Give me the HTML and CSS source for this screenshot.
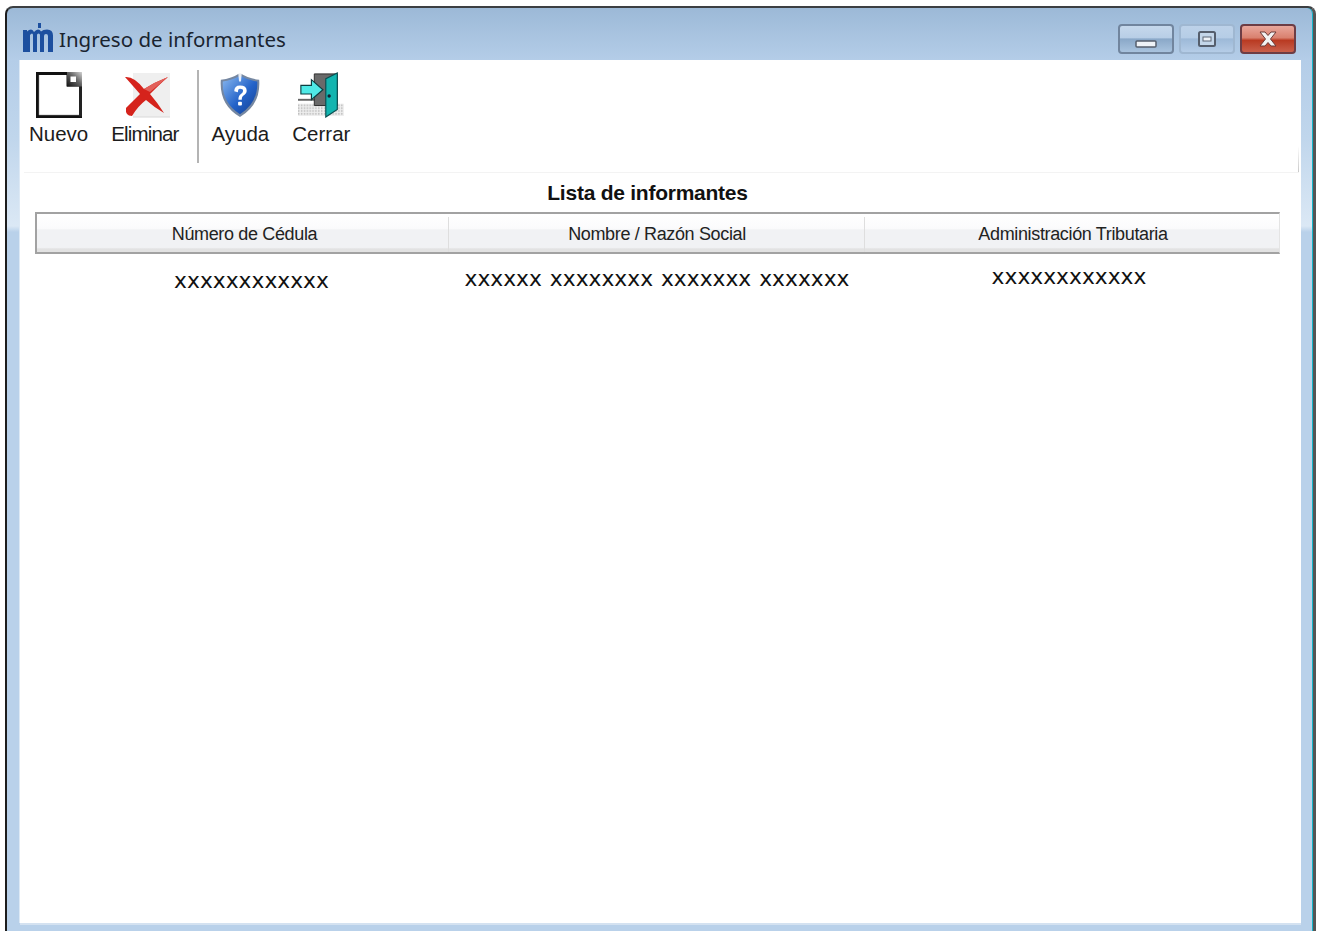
FILE: index.html
```html
<!DOCTYPE html>
<html lang="es">
<head>
<meta charset="utf-8">
<title>Ingreso de informantes</title>
<link rel="stylesheet" href="styles.css">
</head>
<body>
<div class="window">
  <header class="titlebar">
    <svg class="app-logo" viewBox="0 0 30 30" aria-hidden="true">
      <rect x="15" y="0" width="3" height="5" fill="#1c4f9f"/>
      <path d="M0 29V7h4v1.500Q6 6.500 8 6.500t3 2.500Q13 6.500 15 6.500t3 2Q20 6.500 24 6.500q6 0 6 6V29h-5V13q0-2-2-2t-2 2v16h-4V12q0-1.500-1.500-1.500T14 12v17h-4V12q0-1.500-1-1.500T7 12v17z" fill="#1c4f9f"/>
    </svg>
    <span class="window-title">Ingreso de informantes</span>
    <div class="window-controls">
      <button class="ctl">
        <svg viewBox="0 0 22 10" width="22" height="10"><rect x="1" y="2" width="20" height="6" rx="1" fill="#eef2f7" stroke="#555e6c" stroke-width="1.500"/></svg>
      </button>
      <button class="ctl ctl-max">
        <svg viewBox="0 0 20 18" width="20" height="18"><rect x="2" y="2" width="16" height="14" rx="1.500" fill="#c4d6e9" stroke="#555e6c" stroke-width="2"/><rect x="6" y="7" width="8" height="4" fill="#eef2f7" stroke="#5d6776"/></svg>
      </button>
      <button class="ctl ctl-close">
        <svg viewBox="0 0 24 16" width="24" height="16"><path d="M4 1h5l3 3.500L15 1h5l-5.500 7L20 15h-5l-3-3.500L9 15H4l5.500-7z" fill="#f2f2f2" stroke="#6b3b38"/></svg>
      </button>
    </div>
  </header>

  <main class="client">
    <nav class="toolbar">
      <div class="tool">
        <svg class="tool-icon" viewBox="0 0 46 46">
          <defs><linearGradient id="fold" x1="0" y1="1" x2="1" y2="0"><stop offset="0" stop-color="#111"/><stop offset=".55" stop-color="#666"/><stop offset="1" stop-color="#d4d4d4"/></linearGradient></defs>
          <path d="M1.500 1.500H32V13H44.500V44.500H1.500z" fill="#fff" stroke="#111" stroke-width="3"/>
          <path d="M44.500 13V44.500" stroke="#222" stroke-width="3"/>
          <rect x="31" y="0" width="15" height="14.500" fill="url(#fold)"/>
          <rect x="34.500" y="4.500" width="5.500" height="5.500" fill="#fff"/>
          <path d="M3 43H43M3 3V43" stroke="#999" stroke-width="1" fill="none" opacity=".5"/>
        </svg>
        <span>Nuevo</span>
      </div>
      <div class="tool tool-delete">
        <svg class="tool-icon" viewBox="0 0 46 46">
          <rect x="9" y="1" width="37" height="44" fill="#efefef"/>
          <path d="M9 45H46" stroke="#d8d8d8"/>
          <path d="M1 5Q10 4 20 17Q31 10 44 5Q36 12 26 22Q33 30 40 41Q31 36 22 28Q14 34 8 44Q1 44 2 36Q8 30 16 22Q9 14 1 5z" fill="#d5231c"/>
          <path d="M20 17Q31 10 44 5L26 20z" fill="#e2605a"/>
        </svg>
        <span>Eliminar</span>
      </div>
      <div class="tool-sep"></div>
      <div class="tool">
        <svg class="tool-icon" viewBox="0 0 46 48">
          <defs>
            <linearGradient id="shield" x1="0" y1="0" x2="1" y2="1"><stop offset="0" stop-color="#8ab9ef"/><stop offset=".55" stop-color="#2463c9"/><stop offset="1" stop-color="#123f92"/></linearGradient>
          </defs>
          <path d="M23 1Q32 7 43 8Q45 34 23 47Q1 34 3 8Q14 7 23 1z" fill="#7587a1"/>
          <path d="M23 4Q32 9 41 10Q42 32 23 44Q4 32 5 10Q14 9 23 4z" fill="url(#shield)"/>
          <path d="M21 0h4l-1 10h-2z" fill="#fff" opacity=".85"/>
          <path d="M17 20Q17 14 23 14Q30 14 30 19.500Q30 22.500 26 25Q24.800 26 24.800 29H21.400Q21 25 24 23Q26.200 21.500 26.200 19.500Q26.200 17.500 23 17.500Q20.800 17.500 20.800 21z" fill="#fff"/>
          <rect x="21" y="31" width="4" height="4" rx="1" fill="#fff"/>
        </svg>
        <span>Ayuda</span>
      </div>
      <div class="tool">
        <svg class="tool-icon" viewBox="0 0 48 46">
          <defs><pattern id="floor" width="3" height="3" patternUnits="userSpaceOnUse"><rect width="3" height="3" fill="#efefef"/><rect width="1.500" height="1.500" fill="#b4b4b4"/></pattern></defs>
          <path d="M0 32H48V45H0z" fill="url(#floor)"/>
          <path d="M0 28H18" stroke="#666" stroke-width="2"/>
          <path d="M17 1H41V34H17z" fill="#6a6a6a" stroke="#2c2c2c"/>
          <path d="M29 6L41 0V38L29 46z" fill="#12b5b0" stroke="#0a4e50" stroke-width="1.200"/>
          <circle cx="32.500" cy="24" r="1.800" fill="#123"/>
          <path d="M3 13H14V7L26 17.500L14 28V22H3z" fill="#4fe9e6" stroke="#0d3d40" stroke-width="1.200"/>
        </svg>
        <span>Cerrar</span>
      </div>
    </nav>

    <h1 class="list-title">Lista de informantes</h1>

    <section class="list">
      <div class="list-head">
        <div class="head-cell head-a">Número de Cédula</div>
        <div class="head-cell head-b">Nombre / Razón Social</div>
        <div class="head-cell head-c">Administración Tributaria</div>
      </div>
      <div class="list-row">
        <div class="cell cell-a">xxxxxxxxxxxx</div>
        <div class="cell cell-b">xxxxxx xxxxxxxx xxxxxxx xxxxxxx</div>
        <div class="cell cell-c">xxxxxxxxxxxx</div>
      </div>
    </section>
  </main>
</div>
</body>
</html>
```
FILE: styles.css
```css
* { box-sizing: border-box; }

html, body {
  margin: 0;
  height: 931px;
  overflow: hidden;
  background: #fff;
}

body {
  padding: 6px 4px 0 5px;
  font-family: "Liberation Sans", Arial, sans-serif;
}

/* Glass frame of the dialog */
.window {
  height: 925px;
  display: flex;
  flex-direction: column;
  padding: 0 12px 8px 13px;
  border-top: 2px solid #3c3f42;
  border-left: 2px solid #1d1d1d;
  border-right: 3px solid #555;
  border-radius: 8px 8px 0 0;
  background: linear-gradient(#9cb9d7 0, #b4cde8 52px, #c0d6ec 130px, #dbe8f5 218px, #b9d1ea 224px);
  box-shadow: inset -1px 0 0 #12b5c9;
}

.titlebar {
  flex: none;
  height: 52px;
  display: flex;
  align-items: flex-start;
  margin-right: 5px;
}

.app-logo {
  width: 30px;
  height: 30px;
  margin: 15px 6px 0 3px;
  flex: none;
}

.window-title {
  margin-top: 16px;
  font-family: "Noto Sans", "Open Sans", sans-serif;
  font-size: 20.500px;
  line-height: 30px;
  color: #1a2430;
}

.window-controls {
  margin-left: auto;
  margin-top: 16px;
  display: flex;
  gap: 5px;
}

.ctl {
  width: 56px;
  height: 30px;
  padding: 0;
  display: flex;
  align-items: center;
  justify-content: center;
  border: 2px solid #71859e;
  border-radius: 4px;
  background: linear-gradient(#c6d8ec 0, #b8cee6 45%, #8aa8c8 50%, #a9c3de 100%);
}

.ctl:first-child svg { margin-top: 10px; }

.ctl-max {
  border-color: #9fb7d1;
  background: linear-gradient(#bdd2e9 0, #b6cde6 45%, #9db9d8 50%, #b5cde7 100%);
}

.ctl-close {
  border-color: #6d3d45;
  background: linear-gradient(#e9a79c 0, #d9816f 45%, #b93a22 55%, #c9604c 100%);
}

/* White working area */
.client {
  flex: 1;
  display: flex;
  flex-direction: column;
  background: #fff;
  box-shadow: -1px 0 0 #dde9f5, 0 2px 0 #d4e2f1;
}

.toolbar {
  flex: none;
  height: 113px;
  margin: 0 2px 0 4px;
  padding: 10px 0 0 5px;
  display: flex;
  align-items: flex-start;
  gap: 23px;
  border-bottom: 1px solid #f3f3f3;
  background: linear-gradient(#fff, #c9c9c9) no-repeat right bottom / 1px 26px;
}

.tool {
  display: flex;
  flex-direction: column;
  align-items: center;
  font-size: 20.500px;
  line-height: 24px;
  color: #1c1c1c;
}

.tool span { margin-top: 4px; }

.tool-icon {
  width: 46px;
  height: 46px;
  margin-top: 2px;
}

.tool-delete span { letter-spacing: -.85px; }
.tool-delete .tool-icon { margin-left: 4px; }

.tool-sep {
  width: 2px;
  height: 93px;
  margin: 0 -10px 0 -5px;
  background: #b4b4b4;
}

.list-title {
  margin: 0;
  flex: none;
  height: 39px;
  padding-right: 26px;
  text-align: center;
  font-size: 21px;
  letter-spacing: -.25px;
  line-height: 40px;
  font-weight: bold;
  color: #111;
}

.list {
  margin: 0 21px 0 15px;
}

.list-head {
  display: grid;
  grid-template-columns: 412px 416px 1fr;
  height: 42px;
  padding-top: 3px;
  border: 2px solid #a2a2a2;
  border-right-color: #e4e4e4;
  border-right-width: 1px;
  background: linear-gradient(#fff 0, #fbfbfc 38%, #f1f2f4 42%, #f1f2f4 88%, #e2e2e2 92%);
}

.head-cell {
  display: flex;
  align-items: center;
  justify-content: center;
  font-size: 18px;
  color: #222;
  border-right: 1px solid #dedede;
  letter-spacing: -.35px;
}

.head-a { padding-left: 4px; }
.head-b { padding-left: 1px; }
.head-c { border-right: 0; padding-left: 2px; }

.list-row {
  display: grid;
  grid-template-columns: 412px 416px 1fr;
  padding-left: 2px;
  font-family: "DejaVu Sans", Verdana, sans-serif;
  font-size: 21.800px;
  word-spacing: 1px;
  line-height: 26px;
  color: #111;
  text-align: center;
}

.cell-a { padding: 14px 0 0 17px; }
.cell-b { padding-top: 12px; }
.cell-c { padding: 10px 7px 0 0; }
```
